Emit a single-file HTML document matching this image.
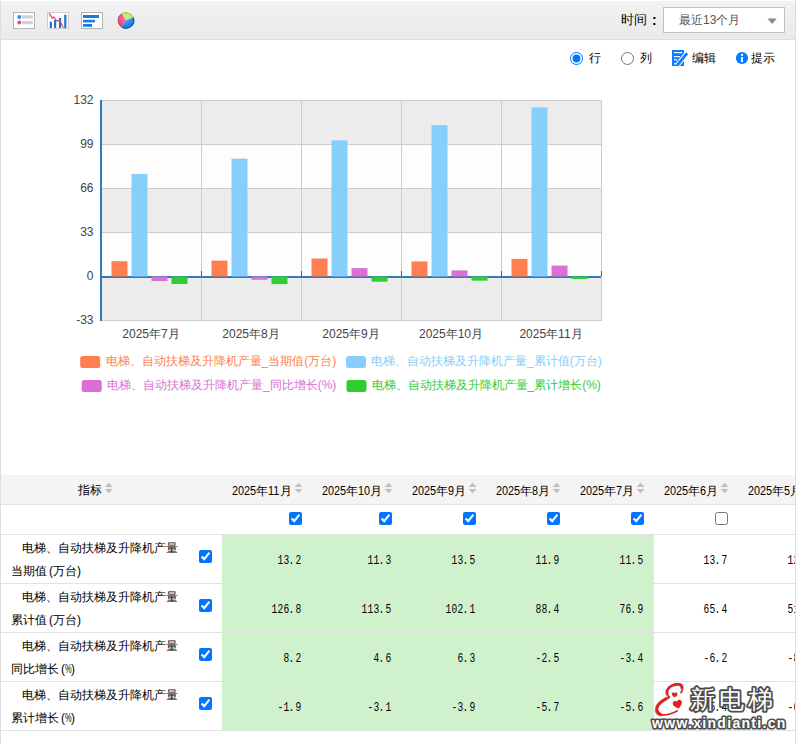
<!DOCTYPE html>
<html><head><meta charset="utf-8">
<style>
*{box-sizing:border-box}
html,body{margin:0;padding:0;width:796px;height:744px;overflow:hidden;background:#fff;font-family:"Liberation Sans",sans-serif;color:#000}
#wrap{position:absolute;left:0;top:0;width:796px;height:744px;overflow:hidden}
.bl{position:absolute;left:0;top:1px;width:1px;height:743px;background:#dedede}
.br{position:absolute;left:795px;top:0;width:1px;height:744px;background:#dedede}
#tb{position:absolute;left:1px;top:1px;width:794px;height:39px;background:linear-gradient(#f2f2f2,#eaeaea);border-bottom:1px solid #dedede}
.ab{position:absolute;white-space:nowrap}
.t12{font-size:12px}
.hd{font-size:12px;color:#000;line-height:16px}
.dg{display:inline-block;font-family:"Liberation Sans",sans-serif;font-size:12.5px;transform:scaleX(.865);transform-origin:0 0;white-space:nowrap;vertical-align:top}
.so{display:block;width:8px;height:11px}
.so:before{content:"";position:absolute;left:0;top:0;border-left:4px solid transparent;border-right:4px solid transparent;border-bottom:4.5px solid #bdbdbd}
.so:after{content:"";position:absolute;left:0;top:6px;border-left:4px solid transparent;border-right:4px solid transparent;border-top:4.5px solid #bdbdbd}
.cb{position:absolute;margin:0;width:13px;height:13px}
.nm{font-size:12px;line-height:23.3px;color:#000}
.pl{display:inline-block;width:6px;text-align:right}
.prr{display:inline-block;width:6px;text-align:left}
.pc{display:inline-block;width:6px;transform:scaleX(.62);transform-origin:0 0;white-space:nowrap}
.num{font-family:"Liberation Mono",monospace;font-size:12px;line-height:12px;color:#000;white-space:nowrap}
.c{display:inline-block;width:6px;text-align:center;transform:scaleX(.8)}
.d{position:relative;left:-1px}
</style></head><body>
<div id="wrap">
<div id="tb"></div>
<!-- toolbar icons -->
<svg class="ab" style="left:0;top:0" width="796" height="40">
  <!-- icon 1 list -->
  <rect x="13.5" y="12.5" width="21" height="16" fill="#fff" stroke="#b4b4b4"/>
  <circle cx="19.3" cy="17" r="2" fill="#2a8cf0"/>
  <circle cx="19.3" cy="22.6" r="2" fill="#e8488f"/>
  <rect x="22" y="15.3" width="10.8" height="3.3" fill="#d2d2d2"/>
  <rect x="22" y="21" width="10.8" height="3.3" fill="#d2d2d2"/>
  <!-- icon 2 chart -->
  <rect x="47.5" y="12.5" width="21" height="16" fill="#fff" stroke="#cdcdcd"/>
  <rect x="49.7" y="21.7" width="2.2" height="6.3" fill="#1f74c8"/>
  <rect x="54" y="20" width="2.2" height="8" fill="#1f74c8"/>
  <rect x="58.9" y="18" width="2.2" height="10" fill="#1f74c8"/>
  <rect x="64.2" y="14.7" width="2.2" height="13.3" fill="#1f74c8"/>
  <polyline points="49.2,13.1 52.4,18.3 54,17 56.4,20.5 60.4,21.4 63.3,27.8" fill="none" stroke="#e8457a" stroke-width="1.3" stroke-linejoin="round"/>
  <!-- icon 3 bars -->
  <rect x="81.5" y="12.5" width="21" height="16" fill="#fff" stroke="#b4b4b4"/>
  <rect x="83" y="15" width="16" height="3" fill="#1a7ae0"/>
  <rect x="83" y="19.8" width="12" height="2.6" fill="#1a7ae0"/>
  <rect x="83" y="24" width="9" height="2.8" fill="#1a7ae0"/>
  <!-- pie -->
  <g transform="translate(126,20.4)">
    <defs><radialGradient id="pg" cx="0.45" cy="0.35" r="0.7"><stop offset="0" stop-color="#fff" stop-opacity="0.3"/><stop offset="1" stop-color="#fff" stop-opacity="0"/></radialGradient></defs>
    <path d="M0,0 L-4.35,-6.95 A8.2,8.2 0 0 1 7.54,-3.23 Z" fill="#b9e35a"/>
    <path d="M0,0 L7.54,-3.23 A8.2,8.2 0 0 1 -4.69,6.72 Z" fill="#1479e6"/>
    <path d="M0,0 L-4.69,6.72 A8.2,8.2 0 0 1 -4.35,-6.95 Z" fill="#e8397a"/>
    <path d="M-4.08,-6.53 A7.699999999999999,7.699999999999999 0 0 1 7.08,-3.03" fill="none" stroke="#86c23a" stroke-width="1"/>
    <path d="M7.08,-3.03 A7.699999999999999,7.699999999999999 0 0 1 -4.41,6.31" fill="none" stroke="#0d4f96" stroke-width="1.1"/>
    <path d="M-4.41,6.31 A7.699999999999999,7.699999999999999 0 0 1 -4.08,-6.53" fill="none" stroke="#c02a55" stroke-width="1"/>
    <circle r="8.2" fill="url(#pg)"/>
  </g>
</svg>
<div class="ab" style="left:620.5px;top:12px;font-size:13px;line-height:16px;color:#000">时间</div><div class="ab" style="left:652px;top:11.5px;font-size:14px;line-height:16px;font-weight:bold;color:#000">:</div>
<div class="ab" style="left:663px;top:7px;width:122px;height:26px;background:#fff;border:1px solid #c2c2c2"></div>
<div class="ab" style="left:679px;top:12px;font-size:12px;color:#555">最近13个月</div>
<svg class="ab" style="left:766.5px;top:17.5px" width="11" height="7"><path d="M0.5,0.5 L9.8,0.5 L5.15,6 Z" fill="#8a8a8a"/></svg>

<!-- radio row -->
<svg class="ab" style="left:0;top:40px" width="796" height="40">
  <!-- edit icon -->
  <rect x="672" y="10" width="12" height="16" fill="#0d7bfa"/>
  <rect x="674" y="12" width="8" height="1.2" fill="#fff"/>
  <rect x="674" y="16" width="6" height="1.2" fill="#fff"/>
  <rect x="674" y="19.2" width="3" height="1.2" fill="#fff"/>
  <rect x="674" y="23.2" width="2.5" height="1.2" fill="#fff"/>
  <line x1="677.8" y1="24.5" x2="686.8" y2="13.6" stroke="#fff" stroke-width="5"/>
  <line x1="677.8" y1="24.5" x2="686.8" y2="13.6" stroke="#0d7bfa" stroke-width="2.8"/>
  <path d="M684.5,15 L686.6,12.3 L688,14.6 Z" fill="#0d7bfa"/>
  <!-- info -->
  <circle cx="742" cy="18" r="6.1" fill="#0b7bff"/>
  <rect x="741" y="17" width="2" height="5" fill="#fff"/>
  <rect x="741" y="14" width="2" height="1.9" fill="#fff"/>
</svg>
<input type="radio" name="rc" class="cb" style="left:570px;top:52px" checked><input type="radio" name="rc" class="cb" style="left:621px;top:52px">
<div class="ab" style="left:589px;top:50.7px;font-size:12px;line-height:14px;color:#000">行</div>
<div class="ab" style="left:640px;top:50.7px;font-size:12px;line-height:14px;color:#000">列</div>
<div class="ab" style="left:692px;top:50.7px;font-size:12px;line-height:14px;color:#000">编辑</div>
<div class="ab" style="left:751px;top:50.7px;font-size:12px;line-height:14px;color:#000">提示</div>

<!--CHART-->
<svg class="ab" style="left:0;top:0" width="796" height="475">
<rect x="101" y="100" width="500" height="44" fill="#ececec"/>
<rect x="101" y="144" width="500" height="44" fill="#fdfdfd"/>
<rect x="101" y="188" width="500" height="44" fill="#ececec"/>
<rect x="101" y="232" width="500" height="44" fill="#fdfdfd"/>
<rect x="101" y="276" width="500" height="44" fill="#ececec"/>
<rect x="101" y="100" width="500" height="1" fill="#cccccc"/>
<rect x="101" y="144" width="500" height="1" fill="#cccccc"/>
<rect x="101" y="188" width="500" height="1" fill="#cccccc"/>
<rect x="101" y="232" width="500" height="1" fill="#cccccc"/>
<rect x="101" y="320" width="500" height="1" fill="#cccccc"/>
<rect x="201" y="100" width="1" height="221" fill="#cccccc"/>
<rect x="301" y="100" width="1" height="221" fill="#cccccc"/>
<rect x="401" y="100" width="1" height="221" fill="#cccccc"/>
<rect x="501" y="100" width="1" height="221" fill="#cccccc"/>
<rect x="601" y="100" width="1" height="221" fill="#cccccc"/>
<rect x="100" y="100" width="2" height="221" fill="#337ab7"/>
<rect x="100" y="276" width="501" height="2" fill="#337ab7"/>
<rect x="201" y="271" width="1" height="5" fill="#555"/>
<rect x="301" y="271" width="1" height="5" fill="#555"/>
<rect x="401" y="271" width="1" height="5" fill="#555"/>
<rect x="501" y="271" width="1" height="5" fill="#555"/>
<rect x="601" y="271" width="1" height="5" fill="#555"/>
<rect x="111.5" y="261.17" width="16" height="15.33" fill="#ff7f50"/>
<rect x="131.5" y="173.97" width="16" height="102.53" fill="#87cefa"/>
<rect x="151.5" y="276.50" width="16" height="4.53" fill="#da70d6"/>
<rect x="171.5" y="276.50" width="16" height="7.47" fill="#32cd32"/>
<rect x="211.5" y="260.63" width="16" height="15.87" fill="#ff7f50"/>
<rect x="231.5" y="158.63" width="16" height="117.87" fill="#87cefa"/>
<rect x="251.5" y="276.50" width="16" height="3.33" fill="#da70d6"/>
<rect x="271.5" y="276.50" width="16" height="7.60" fill="#32cd32"/>
<rect x="311.5" y="258.50" width="16" height="18.00" fill="#ff7f50"/>
<rect x="331.5" y="140.37" width="16" height="136.13" fill="#87cefa"/>
<rect x="351.5" y="268.10" width="16" height="8.40" fill="#da70d6"/>
<rect x="371.5" y="276.50" width="16" height="5.20" fill="#32cd32"/>
<rect x="411.5" y="261.43" width="16" height="15.07" fill="#ff7f50"/>
<rect x="431.5" y="125.17" width="16" height="151.33" fill="#87cefa"/>
<rect x="451.5" y="270.37" width="16" height="6.13" fill="#da70d6"/>
<rect x="471.5" y="276.50" width="16" height="4.13" fill="#32cd32"/>
<rect x="511.5" y="258.90" width="16" height="17.60" fill="#ff7f50"/>
<rect x="531.5" y="107.43" width="16" height="169.07" fill="#87cefa"/>
<rect x="551.5" y="265.57" width="16" height="10.93" fill="#da70d6"/>
<rect x="571.5" y="276.50" width="16" height="2.53" fill="#32cd32"/>
<text x="93.5" y="103.5" text-anchor="end" font-family="Liberation Sans" font-size="12" fill="#444">132</text>
<text x="93.5" y="147.5" text-anchor="end" font-family="Liberation Sans" font-size="12" fill="#444">99</text>
<text x="93.5" y="191.5" text-anchor="end" font-family="Liberation Sans" font-size="12" fill="#444">66</text>
<text x="93.5" y="235.5" text-anchor="end" font-family="Liberation Sans" font-size="12" fill="#444">33</text>
<text x="93.5" y="279.5" text-anchor="end" font-family="Liberation Sans" font-size="12" fill="#444">0</text>
<text x="93.5" y="323.5" text-anchor="end" font-family="Liberation Sans" font-size="12" fill="#444">-33</text>
<text x="151" y="338" text-anchor="middle" font-family="Liberation Sans" font-size="12" fill="#444">2025年7月</text>
<text x="251" y="338" text-anchor="middle" font-family="Liberation Sans" font-size="12" fill="#444">2025年8月</text>
<text x="351" y="338" text-anchor="middle" font-family="Liberation Sans" font-size="12" fill="#444">2025年9月</text>
<text x="451" y="338" text-anchor="middle" font-family="Liberation Sans" font-size="12" fill="#444">2025年10月</text>
<text x="551" y="338" text-anchor="middle" font-family="Liberation Sans" font-size="12" fill="#444">2025年11月</text>
</svg>
<!--/CHART-->
<!--LEGEND-->
<svg class="ab" style="left:0;top:340px" width="796" height="60" font-family="Liberation Sans" font-size="12">
<rect x="80.2" y="16" width="20" height="12" rx="2.5" fill="#ff7f50"/>
<text x="105.5" y="24.5" fill="#ff7f50">电梯、自动扶梯及升降机产量_当期值(万台)</text>
<rect x="346" y="16" width="20" height="12" rx="2.5" fill="#87cefa"/>
<text x="371" y="24.5" fill="#87cefa">电梯、自动扶梯及升降机产量_累计值(万台)</text>
<rect x="81.7" y="40" width="20" height="12" rx="2.5" fill="#da70d6"/>
<text x="107" y="48.5" fill="#da70d6">电梯、自动扶梯及升降机产量_同比增长(%)</text>
<rect x="346.5" y="40" width="20" height="12" rx="2.5" fill="#32cd32"/>
<text x="371.5" y="48.5" fill="#32cd32">电梯、自动扶梯及升降机产量_累计增长(%)</text>
</svg>
<!--/LEGEND-->
<!--TABLE-->
<div class="ab" style="left:1px;top:475px;width:794px;height:29px;background:#f4f4f4"></div>
<div class="ab" style="left:1px;top:504px;width:794px;height:1px;background:#e2e2e2"></div>
<div class="ab" style="left:1px;top:534px;width:794px;height:1px;background:#e2e2e2"></div>
<div class="ab" style="left:1px;top:583px;width:794px;height:1px;background:#e2e2e2"></div>
<div class="ab" style="left:1px;top:632px;width:794px;height:1px;background:#e2e2e2"></div>
<div class="ab" style="left:1px;top:681px;width:794px;height:1px;background:#e2e2e2"></div>
<div class="ab" style="left:1px;top:730px;width:794px;height:1px;background:#e2e2e2"></div>
<div class="ab" style="left:222px;top:535px;width:432px;height:48px;background:#cff2cd"></div>
<div class="ab" style="left:222px;top:584px;width:432px;height:48px;background:#cff2cd"></div>
<div class="ab" style="left:222px;top:633px;width:432px;height:48px;background:#cff2cd"></div>
<div class="ab" style="left:222px;top:682px;width:432px;height:48px;background:#cff2cd"></div>
<div class="ab hd" style="left:78px;top:482.0px">指标</div>
<div class="ab hd" style="left:231.5px;top:482.5px"><span class="dg" style="width:24px">2025</span>年<span class="dg" style="width:12px">11</span>月</div>
<input type="checkbox" class="cb" style="left:289px;top:512px" checked>
<div class="ab hd" style="left:321.5px;top:482.5px"><span class="dg" style="width:24px">2025</span>年<span class="dg" style="width:12px">10</span>月</div>
<input type="checkbox" class="cb" style="left:379px;top:512px" checked>
<div class="ab hd" style="left:411.5px;top:482.5px"><span class="dg" style="width:24px">2025</span>年<span class="dg" style="width:6px">9</span>月</div>
<input type="checkbox" class="cb" style="left:463px;top:512px" checked>
<div class="ab hd" style="left:495.5px;top:482.5px"><span class="dg" style="width:24px">2025</span>年<span class="dg" style="width:6px">8</span>月</div>
<input type="checkbox" class="cb" style="left:547px;top:512px" checked>
<div class="ab hd" style="left:579.5px;top:482.5px"><span class="dg" style="width:24px">2025</span>年<span class="dg" style="width:6px">7</span>月</div>
<input type="checkbox" class="cb" style="left:631px;top:512px" checked>
<div class="ab hd" style="left:663.5px;top:482.5px"><span class="dg" style="width:24px">2025</span>年<span class="dg" style="width:6px">6</span>月</div>
<input type="checkbox" class="cb" style="left:715px;top:512px">
<div class="ab hd" style="left:747.5px;top:482.5px"><span class="dg" style="width:24px">2025</span>年<span class="dg" style="width:6px">5</span>月</div>
<svg class="ab" style="left:0;top:0" width="796" height="500"><path d="M105,487.1 L112.6,487.1 L108.8,482.8 Z M105,489 L112.6,489 L108.8,493.3 Z" fill="#bfbfbf"/><path d="M294.8,487.1 L302.40000000000003,487.1 L298.6,482.8 Z M294.8,489 L302.40000000000003,489 L298.6,493.3 Z" fill="#bfbfbf"/><path d="M384.8,487.1 L392.40000000000003,487.1 L388.6,482.8 Z M384.8,489 L392.40000000000003,489 L388.6,493.3 Z" fill="#bfbfbf"/><path d="M468.8,487.1 L476.40000000000003,487.1 L472.6,482.8 Z M468.8,489 L476.40000000000003,489 L472.6,493.3 Z" fill="#bfbfbf"/><path d="M552.8,487.1 L560.4,487.1 L556.5999999999999,482.8 Z M552.8,489 L560.4,489 L556.5999999999999,493.3 Z" fill="#bfbfbf"/><path d="M636.8,487.1 L644.4,487.1 L640.5999999999999,482.8 Z M636.8,489 L644.4,489 L640.5999999999999,493.3 Z" fill="#bfbfbf"/><path d="M720.8,487.1 L728.4,487.1 L724.5999999999999,482.8 Z M720.8,489 L728.4,489 L724.5999999999999,493.3 Z" fill="#bfbfbf"/><path d="M804.8,487.1 L812.4,487.1 L808.5999999999999,482.8 Z M804.8,489 L812.4,489 L808.5999999999999,493.3 Z" fill="#bfbfbf"/></svg>
<div class="ab nm" style="left:11px;top:536.5px"><span style="display:inline-block;width:11.3px"></span>电梯、自动扶梯及升降机产量<br>当期值<span class="pl">(</span>万台<span class="prr">)</span></div>
<input type="checkbox" class="cb" style="left:199px;top:550px" checked>
<div class="ab num" style="left:277px;top:555px;width:24px"><span class="c">1</span><span class="c">3</span><span class="c d">.</span><span class="c">2</span></div>
<div class="ab num" style="left:367px;top:555px;width:24px"><span class="c">1</span><span class="c">1</span><span class="c d">.</span><span class="c">3</span></div>
<div class="ab num" style="left:451px;top:555px;width:24px"><span class="c">1</span><span class="c">3</span><span class="c d">.</span><span class="c">5</span></div>
<div class="ab num" style="left:535px;top:555px;width:24px"><span class="c">1</span><span class="c">1</span><span class="c d">.</span><span class="c">9</span></div>
<div class="ab num" style="left:619px;top:555px;width:24px"><span class="c">1</span><span class="c">1</span><span class="c d">.</span><span class="c">5</span></div>
<div class="ab num" style="left:703px;top:555px;width:24px"><span class="c">1</span><span class="c">3</span><span class="c d">.</span><span class="c">7</span></div>
<div class="ab num" style="left:787px;top:555px;width:24px"><span class="c">1</span><span class="c">2</span><span class="c d">.</span><span class="c">9</span></div>
<div class="ab nm" style="left:11px;top:585.5px"><span style="display:inline-block;width:11.3px"></span>电梯、自动扶梯及升降机产量<br>累计值<span class="pl">(</span>万台<span class="prr">)</span></div>
<input type="checkbox" class="cb" style="left:199px;top:599px" checked>
<div class="ab num" style="left:271px;top:604px;width:30px"><span class="c">1</span><span class="c">2</span><span class="c">6</span><span class="c d">.</span><span class="c">8</span></div>
<div class="ab num" style="left:361px;top:604px;width:30px"><span class="c">1</span><span class="c">1</span><span class="c">3</span><span class="c d">.</span><span class="c">5</span></div>
<div class="ab num" style="left:445px;top:604px;width:30px"><span class="c">1</span><span class="c">0</span><span class="c">2</span><span class="c d">.</span><span class="c">1</span></div>
<div class="ab num" style="left:535px;top:604px;width:24px"><span class="c">8</span><span class="c">8</span><span class="c d">.</span><span class="c">4</span></div>
<div class="ab num" style="left:619px;top:604px;width:24px"><span class="c">7</span><span class="c">6</span><span class="c d">.</span><span class="c">9</span></div>
<div class="ab num" style="left:703px;top:604px;width:24px"><span class="c">6</span><span class="c">5</span><span class="c d">.</span><span class="c">4</span></div>
<div class="ab num" style="left:787px;top:604px;width:24px"><span class="c">5</span><span class="c">1</span><span class="c d">.</span><span class="c">7</span></div>
<div class="ab nm" style="left:11px;top:634.5px"><span style="display:inline-block;width:11.3px"></span>电梯、自动扶梯及升降机产量<br>同比增长<span class="pl">(</span><span class="pc">%</span><span class="prr">)</span></div>
<input type="checkbox" class="cb" style="left:199px;top:648px" checked>
<div class="ab num" style="left:283px;top:653px;width:18px"><span class="c">8</span><span class="c d">.</span><span class="c">2</span></div>
<div class="ab num" style="left:373px;top:653px;width:18px"><span class="c">4</span><span class="c d">.</span><span class="c">6</span></div>
<div class="ab num" style="left:457px;top:653px;width:18px"><span class="c">6</span><span class="c d">.</span><span class="c">3</span></div>
<div class="ab num" style="left:535px;top:653px;width:24px"><span class="c">-</span><span class="c">2</span><span class="c d">.</span><span class="c">5</span></div>
<div class="ab num" style="left:619px;top:653px;width:24px"><span class="c">-</span><span class="c">3</span><span class="c d">.</span><span class="c">4</span></div>
<div class="ab num" style="left:703px;top:653px;width:24px"><span class="c">-</span><span class="c">6</span><span class="c d">.</span><span class="c">2</span></div>
<div class="ab num" style="left:787px;top:653px;width:24px"><span class="c">-</span><span class="c">8</span><span class="c d">.</span><span class="c">1</span></div>
<div class="ab nm" style="left:11px;top:683.5px"><span style="display:inline-block;width:11.3px"></span>电梯、自动扶梯及升降机产量<br>累计增长<span class="pl">(</span><span class="pc">%</span><span class="prr">)</span></div>
<input type="checkbox" class="cb" style="left:199px;top:697px" checked>
<div class="ab num" style="left:277px;top:702px;width:24px"><span class="c">-</span><span class="c">1</span><span class="c d">.</span><span class="c">9</span></div>
<div class="ab num" style="left:367px;top:702px;width:24px"><span class="c">-</span><span class="c">3</span><span class="c d">.</span><span class="c">1</span></div>
<div class="ab num" style="left:451px;top:702px;width:24px"><span class="c">-</span><span class="c">3</span><span class="c d">.</span><span class="c">9</span></div>
<div class="ab num" style="left:535px;top:702px;width:24px"><span class="c">-</span><span class="c">5</span><span class="c d">.</span><span class="c">7</span></div>
<div class="ab num" style="left:619px;top:702px;width:24px"><span class="c">-</span><span class="c">5</span><span class="c d">.</span><span class="c">6</span></div>
<div class="ab num" style="left:703px;top:702px;width:24px"><span class="c">-</span><span class="c">5</span><span class="c d">.</span><span class="c">4</span></div>
<div class="ab num" style="left:787px;top:702px;width:24px"><span class="c">-</span><span class="c">6</span><span class="c d">.</span><span class="c">0</span></div>
<!--/TABLE-->
<!--WM-->
<svg class="ab" style="left:640px;top:676px" width="156" height="60">
<g fill="none" stroke-linecap="round" stroke="#1a1a1a" opacity="0.45" transform="translate(-0.7,0.6)">
<path d="M41.5,16.4 C42.8,13.5 43.5,9.5 40,8.2 C36,6.8 30,9.5 27.8,13 C26.5,15.5 27,19 29.5,21" stroke-width="1.6"/><path d="M42.3,11.5 C42,8.5 40,8 38,8.1 C34,8.3 29.5,10.5 27.8,13.5 C27,15 27,16.5 27.5,17.5" stroke-width="2.6"/>
<path d="M29.5,21.2 C25,23 19.5,27 17.5,31 C15.5,35 17.5,38.5 22,38.8 C27,39 33,37 37.3,34.8" stroke-width="1.6"/><path d="M26,22.8 C21,25.5 18,28.5 17.2,31.5 C16.5,34.5 17.5,37 20.5,38.3" stroke-width="3"/>
</g>
<g fill="none" stroke-linecap="round" stroke="#e41e1e">
<path d="M41.5,16.4 C42.8,13.5 43.5,9.5 40,8.2 C36,6.8 30,9.5 27.8,13 C26.5,15.5 27,19 29.5,21" stroke-width="1.4"/><path d="M42.3,11.5 C42,8.5 40,8 38,8.1 C34,8.3 29.5,10.5 27.8,13.5 C27,15 27,16.5 27.5,17.5" stroke-width="2.4"/>
<path d="M29.5,21.2 C25,23 19.5,27 17.5,31 C15.5,35 17.5,38.5 22,38.8 C27,39 33,37 37.3,34.8" stroke-width="1.5"/><path d="M26,22.8 C21,25.5 18,28.5 17.2,31.5 C16.5,34.5 17.5,37 20.5,38.3" stroke-width="2.8"/>
</g>
<path transform="translate(34.7,19.1) scale(0.67)" d="M0,3.5 C-4,0.5 -5,-1.5 -3.6,-3.3 C-2.2,-4.8 0,-3.8 0,-2.3 C0,-3.8 2.2,-4.8 3.6,-3.3 C5,-1.5 4,0.5 0,3.5 Z" fill="#e41e1e"/>
<path transform="translate(37.8,28.8) rotate(-15) scale(1.1)" d="M0,3.5 C-4,0.5 -5,-1.5 -3.6,-3.3 C-2.2,-4.8 0,-3.8 0,-2.3 C0,-3.8 2.2,-4.8 3.6,-3.3 C5,-1.5 4,0.5 0,3.5 Z" fill="#e41e1e"/>
<text x="49.5" y="32" font-family="Liberation Sans" font-size="25" fill="#fff" stroke="#4d4d4d" stroke-width="3.6" stroke-linejoin="round" paint-order="stroke" letter-spacing="4">新电梯</text>
<text x="12" y="51.5" font-family="Liberation Sans" font-size="14" font-weight="bold" fill="#fff" stroke="#4d4d4d" stroke-width="3.2" stroke-linejoin="round" paint-order="stroke" letter-spacing="1.3">www.xindianti.cn</text>
</svg>
<!--/WM-->
<div class="bl"></div><div class="br"></div>
</div>
</body></html>
